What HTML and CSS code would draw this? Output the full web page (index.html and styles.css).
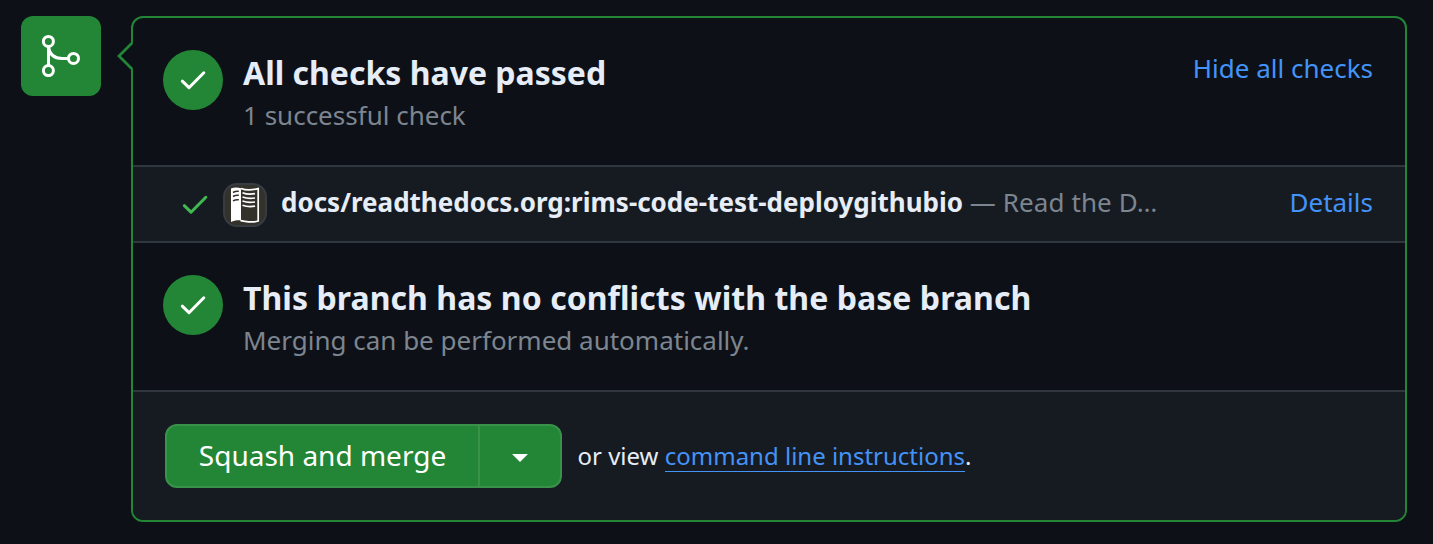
FILE: index.html
```html
<!DOCTYPE html>
<html lang="en">
<head>
<meta charset="utf-8">
<title>Merge status</title>
<link rel="stylesheet" href="styles.css">
</head>
<body>
<main class="merge">
  <div class="badge">
    <svg class="badge-icon" viewBox="0 0 80 80" fill="none" stroke="#fff" stroke-width="3">
      <circle cx="27.4" cy="25.4" r="5"/>
      <circle cx="27.4" cy="54.6" r="5"/>
      <circle cx="52.5" cy="42.4" r="5"/>
      <path d="M27.5 30.5V49.5M27.5 31C28.5 38 33 42.4 41 42.4H47.5"/>
    </svg>
  </div>
  <section class="panel">
    <svg class="caret" viewBox="0 0 16 28"><path class="caret-fill" d="M16 0.5L2 14L16 27.5Z"/><path d="M15.3 0.8L2 14L15.3 27.2" fill="none" stroke="#238636" stroke-width="2.8"/></svg>
    <div class="status">
      <span class="circle"><svg class="check" viewBox="0 0 26 20"><path d="M2.3 11.2L9 17.7L23.8 2.8"/></svg></span>
      <div class="copy">
        <h3 class="heading">All checks have passed</h3>
        <p class="sub">1 successful check</p>
      </div>
      <a class="link toggle">Hide all checks</a>
    </div>
    <div class="check-row">
      <svg class="check check-green" viewBox="0 0 26 20"><path d="M2.3 10.7L9 17.2L23.8 2.3"/></svg>
      <svg class="avatar" viewBox="0 0 44 44">
        <rect x="1" y="1" width="42" height="42" rx="13" fill="#32322a" stroke="#373b42" stroke-width="2"/>
        <path d="M8 5.6C11 4 15 4.2 18 5.3V37.5C15 37 11 37.5 8 39Z" fill="#fff"/>
        <path d="M18 5.5C23 7.5 30 7 35.2 5.6V38C29 40.3 23 38.2 17.5 37.7" fill="none" stroke="#fff" stroke-width="1.7"/>
        <path d="M10 9.5Q12.5 8 15.8 8.3M10 13.5Q12.5 12 15.8 12.3M10 17.8Q12.5 16.5 15.8 16.8" fill="none" stroke="#32322a" stroke-width="1.5"/>
        <path d="M19.5 9.7Q25 12 32 10.7M19.5 14Q25 16.2 32 15M19.5 18Q25 20.2 32 19M19.5 22.2Q25 24.4 32 23.2" fill="none" stroke="#fff" stroke-width="1.7"/>
      </svg>
      <div class="check-name"><strong class="strong">docs/readthedocs.org:rims-code-test-deploygithubio</strong> <span class="muted">— Read the D…</span></div>
      <a class="link details">Details</a>
    </div>
    <div class="status">
      <span class="circle"><svg class="check" viewBox="0 0 26 20"><path d="M2.3 11.2L9 17.7L23.8 2.8"/></svg></span>
      <div class="copy">
        <h3 class="heading heading-wide">This branch has no conflicts with the base branch</h3>
        <p class="sub">Merging can be performed automatically.</p>
      </div>
    </div>
    <div class="actions">
      <div class="button-group">
        <button class="button">Squash and merge</button>
        <button class="button button-menu" aria-label="Select merge method"><svg class="triangle" viewBox="0 0 16 8"><path d="M0 0H16L8 8Z" fill="#fff"/></svg></button>
      </div>
      <p class="hint">or view <a class="link link-line">command line instructions</a>.</p>
    </div>
  </section>
</main>
</body>
</html>
```
FILE: styles.css
```css
* { box-sizing: border-box; }
body {
  margin: 0;
  background: #0d1117;
  color: #e6edf6;
  font: 26px/39px "Noto Sans", sans-serif;
}
h3, p { margin: 0; }
.merge {
  display: flex;
  align-items: flex-start;
  gap: 30px;
  padding: 16px 26px 22px 21px;
}
.badge {
  flex: none;
  width: 80px;
  height: 80px;
  border-radius: 12px;
  background: #238636;
}
.badge-icon { display: block; width: 80px; height: 80px; }
.panel {
  position: relative;
  flex: 1;
  height: 506px;
  display: flex;
  flex-direction: column;
  border: 2px solid #238636;
  border-radius: 12px;
}
.caret {
  position: absolute;
  left: -16px;
  top: 24px;
  width: 16px;
  height: 28px;
}
.caret-fill { fill: #0d1117; }
.status {
  display: flex;
  align-items: flex-start;
  height: 149px;
  padding: 32px 32px 0 30px;
  border-bottom: 2px solid #30363d;
}
.circle {
  flex: none;
  display: flex;
  align-items: center;
  justify-content: center;
  width: 60px;
  height: 60px;
  margin-right: 20px;
  border-radius: 50%;
  background: #238636;
}
.check {
  display: block;
  flex: none;
  width: 26px;
  height: 20px;
  fill: none;
  stroke: #fff;
  stroke-width: 3;
  stroke-linecap: round;
  stroke-linejoin: round;
}
.check-green { margin: 2px 15px 0 0; stroke: #3fb950; }
.copy { flex: 1; }
.heading { font-size: 32px; line-height: 47px; font-weight: 700; margin-top: -1px; }
.heading-wide { letter-spacing: 0.05px; }
.sub { color: #7d8590; line-height: 39px; }
.link { color: #4493f8; }
.toggle { margin-top: -1px; }
.check-row {
  display: flex;
  align-items: center;
  height: 76px;
  padding: 0 32px 0 49px;
  background: #161b22;
  border-bottom: 2px solid #30363d;
}
.avatar { flex: none; width: 44px; height: 44px; margin: 2px 14px 0 0; }
.check-name { flex: 1; white-space: nowrap; margin-bottom: 4px; }
.details { margin-bottom: 4px; }
.strong { font-weight: 700; }
.muted { color: #7d8590; letter-spacing: 0.1px; }
.actions {
  flex: 1;
  display: flex;
  align-items: center;
  gap: 15.5px;
  padding: 0 32px;
  background: #161b22;
  border-radius: 0 0 10px 10px;
}
.button-group {
  display: flex;
  width: 397px;
  height: 64px;
  border: 2px solid #39914a;
  border-radius: 12px;
  background: #238636;
  overflow: hidden;
}
.button {
  flex: 1;
  padding: 0 0 2px;
  border: 0;
  background: none;
  color: #fff;
  font: 28px/40px "Noto Sans", sans-serif;
}
.button-menu {
  flex: none;
  display: flex;
  align-items: center;
  justify-content: center;
  width: 82px;
  padding: 0;
  border-left: 2px solid #39914a;
}
.triangle { width: 16px; height: 8px; margin-top: 3px; }
.hint { font-size: 24px; line-height: 36px; white-space: nowrap; }
.link-line { display: inline-block; line-height: 31px; border-bottom: 1px solid #4493f8; }
```
